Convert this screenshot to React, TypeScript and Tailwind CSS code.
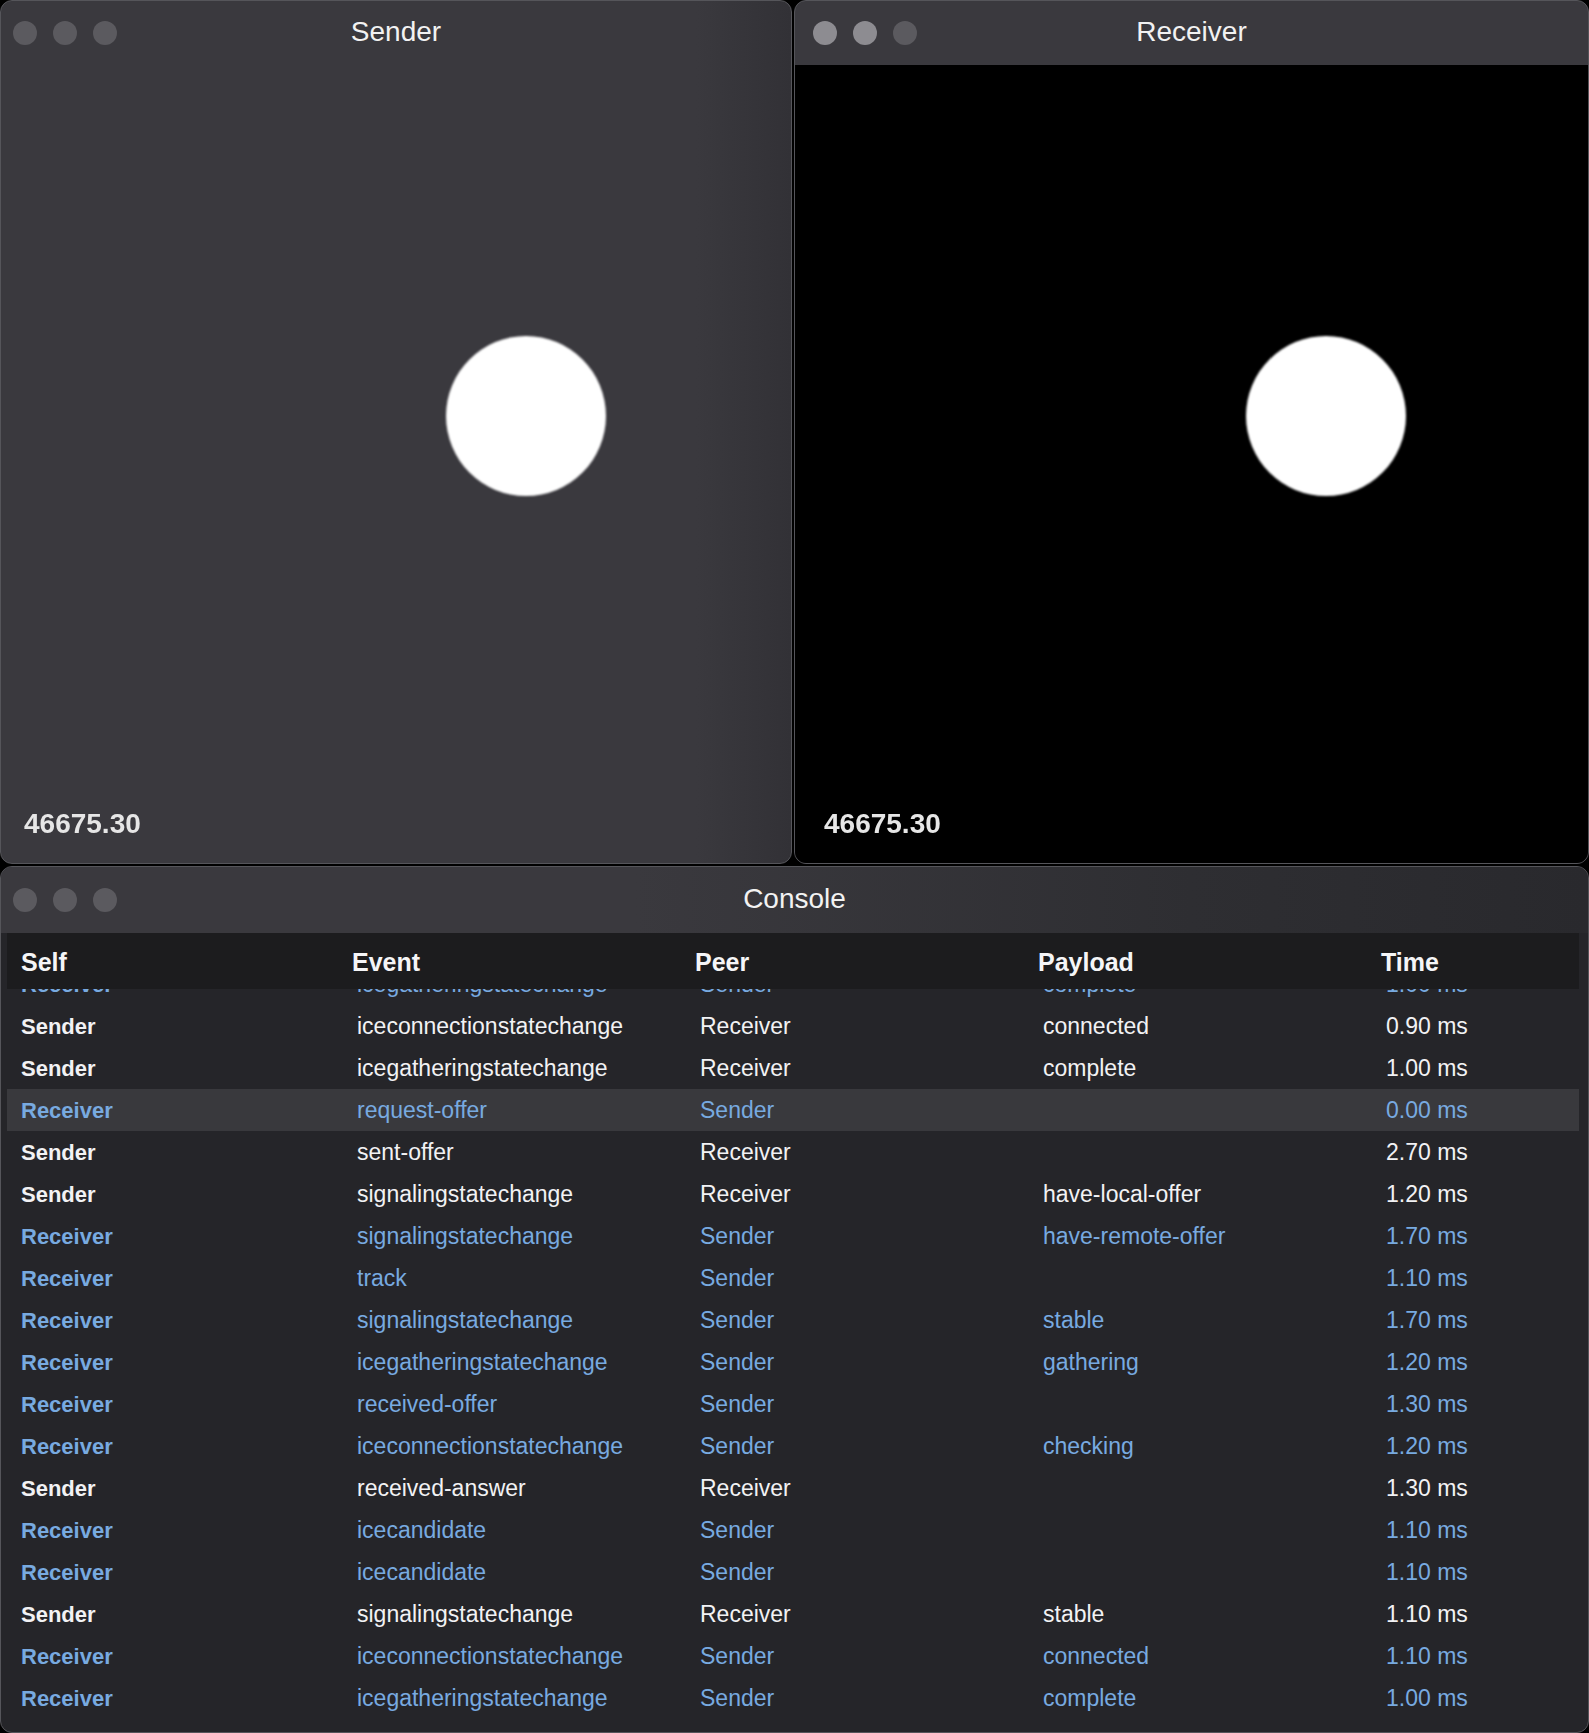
import React from "react";

type Row = { self: string; event: string; peer: string; payload: string; time: string; hl?: boolean };

const rows: Row[] = [
  { self: "Receiver", event: "icegatheringstatechange", peer: "Sender", payload: "complete", time: "1.00 ms" },
  { self: "Sender", event: "iceconnectionstatechange", peer: "Receiver", payload: "connected", time: "0.90 ms" },
  { self: "Sender", event: "icegatheringstatechange", peer: "Receiver", payload: "complete", time: "1.00 ms" },
  { self: "Receiver", event: "request-offer", peer: "Sender", payload: "", time: "0.00 ms", hl: true },
  { self: "Sender", event: "sent-offer", peer: "Receiver", payload: "", time: "2.70 ms" },
  { self: "Sender", event: "signalingstatechange", peer: "Receiver", payload: "have-local-offer", time: "1.20 ms" },
  { self: "Receiver", event: "signalingstatechange", peer: "Sender", payload: "have-remote-offer", time: "1.70 ms" },
  { self: "Receiver", event: "track", peer: "Sender", payload: "", time: "1.10 ms" },
  { self: "Receiver", event: "signalingstatechange", peer: "Sender", payload: "stable", time: "1.70 ms" },
  { self: "Receiver", event: "icegatheringstatechange", peer: "Sender", payload: "gathering", time: "1.20 ms" },
  { self: "Receiver", event: "received-offer", peer: "Sender", payload: "", time: "1.30 ms" },
  { self: "Receiver", event: "iceconnectionstatechange", peer: "Sender", payload: "checking", time: "1.20 ms" },
  { self: "Sender", event: "received-answer", peer: "Receiver", payload: "", time: "1.30 ms" },
  { self: "Receiver", event: "icecandidate", peer: "Sender", payload: "", time: "1.10 ms" },
  { self: "Receiver", event: "icecandidate", peer: "Sender", payload: "", time: "1.10 ms" },
  { self: "Sender", event: "signalingstatechange", peer: "Receiver", payload: "stable", time: "1.10 ms" },
  { self: "Receiver", event: "iceconnectionstatechange", peer: "Sender", payload: "connected", time: "1.10 ms" },
  { self: "Receiver", event: "icegatheringstatechange", peer: "Sender", payload: "complete", time: "1.00 ms" },
];

const font = { fontFamily: '"Liberation Sans", Arial, sans-serif' };

function Dots({ active, pl }: { active?: boolean; pl: string }) {
  return (
    <div className={`flex items-center gap-[16px] ${pl}`}>
      <div className={`w-[24px] h-[24px] rounded-full ${active ? "bg-[#8d8c91]" : "bg-[#5b5a5f]"}`} />
      <div className={`w-[24px] h-[24px] rounded-full ${active ? "bg-[#8d8c91]" : "bg-[#5b5a5f]"}`} />
      <div className="w-[24px] h-[24px] rounded-full bg-[#5b5a5f]" />
    </div>
  );
}

function TitleBar({ title, active, h, pl }: { title: string; active?: boolean; h: string; pl: string }) {
  return (
    <div className={`grid grid-cols-[1fr_auto_1fr] items-center ${h} shrink-0`}>
      <Dots active={active} pl={pl} />
      <div className="text-[28px] text-[#f2f2f2] leading-none -mt-[3px]">{title}</div>
      <div />
    </div>
  );
}

function VideoWindow({
  title,
  active,
  dark,
  circleLeft,
  numLeft,
  dotsPl,
  width,
}: {
  title: string;
  active?: boolean;
  dark?: boolean;
  circleLeft: string;
  numLeft: string;
  dotsPl: string;
  width: string;
}) {
  return (
    <div
      className={`${width} h-full rounded-[12px] border border-[#55555a] overflow-hidden flex flex-col ${
        dark ? "bg-[#3a393e]" : "bg-[linear-gradient(to_right,#3a393e_88%,#323136)]"
      }`}
    >
      <TitleBar title={title} active={active} h="h-[64px]" pl={dotsPl} />
      <div className={`relative flex-1 ${dark ? "bg-black" : ""}`}>
        <div className={`absolute ${circleLeft} top-[271px] w-[160px] h-[160px] rounded-full bg-white blur-[0.8px]`} />
        <div
          className={`absolute ${numLeft} bottom-[25px] text-[28px] leading-[28px] font-bold text-[#e6e6e6] blur-[0.4px]`}
        >
          46675.30
        </div>
      </div>
    </div>
  );
}

export default function App() {
  return (
    <div className="w-[1589px] h-[1733px] bg-black flex flex-col gap-[2px] overflow-hidden" style={font}>
      <div className="flex gap-[2px] h-[864px] shrink-0">
        <VideoWindow
          title="Sender"
          circleLeft="left-[445px]"
          numLeft="left-[23px]"
          dotsPl="pl-[12px]"
          width="w-[792px]"
        />
        <VideoWindow
          title="Receiver"
          active
          dark
          circleLeft="left-[451px]"
          numLeft="left-[29px]"
          dotsPl="pl-[18px]"
          width="flex-1"
        />
      </div>
      <div className="flex-1 rounded-[12px] border border-[#55555a] overflow-hidden flex flex-col bg-[#252529]">
        <div className="bg-[linear-gradient(to_right,#3a393e_40%,#2e2e32_75%,#29292d)]">
          <TitleBar title="Console" h="h-[66px]" pl="pl-[12px]" />
        </div>
        <div className="flex-1 flex flex-col pl-[6px] pr-[9px] min-h-0">
          <div className="h-[56px] shrink-0 bg-[#1c1c1e] grid grid-cols-[331px_343px_343px_343px_1fr] items-center pl-[14px] pt-[3px] text-[25px] font-bold text-[#f5f5f7]">
            <div>Self</div>
            <div>Event</div>
            <div>Peer</div>
            <div>Payload</div>
            <div>Time</div>
          </div>
          <div className="flex-1 overflow-hidden">
            <div className="-mt-[26px] flex flex-col">
              {rows.map((r, i) => {
                const blue = r.self === "Receiver";
                const color = blue ? "text-[#78aae0]" : "text-[#f2f2f4]";
                return (
                  <div
                    key={i}
                    className={`h-[42px] shrink-0 grid grid-cols-[331px_343px_343px_343px_1fr] items-center pl-[14px] text-[23px] ${color} ${
                      r.hl ? "bg-[#39393d]" : ""
                    }`}
                  >
                    <div className="font-bold text-[22px]">{r.self}</div>
                    <div className="pl-[5px]">{r.event}</div>
                    <div className="pl-[5px]">{r.peer}</div>
                    <div className="pl-[5px]">{r.payload}</div>
                    <div className="pl-[5px]">{r.time}</div>
                  </div>
                );
              })}
            </div>
          </div>
        </div>
      </div>
    </div>
  );
}
